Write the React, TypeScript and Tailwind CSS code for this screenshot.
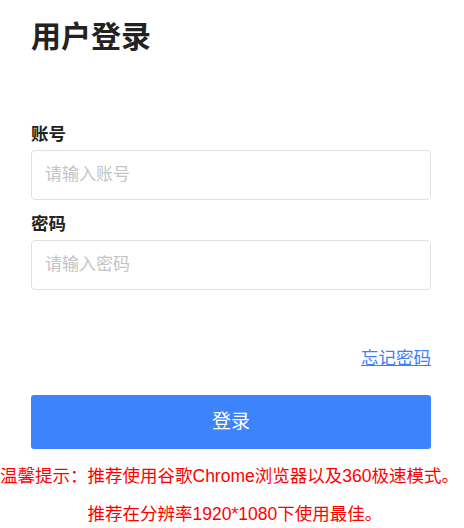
export default function App() {
  return (
    <div className="w-[464px] h-[528px] overflow-hidden bg-white font-['Liberation_Sans','Noto_Sans_CJK_SC',sans-serif]">
      <div className="w-[400px] ml-[31px] pt-[17px]">
        <h1 className="text-[30px] leading-[40px] font-bold text-[#222]">用户登录</h1>

        <form className="mt-[65px]" onSubmit={(e) => e.preventDefault()}>
          <label className="block text-[17.5px] leading-[24px] font-bold text-[#222]">账号</label>
          <input
            className="mt-1 block w-full h-[50px] px-[13px] text-[17px] border border-[#e0e0e0] rounded-[4px] outline-none placeholder:text-[#c4c4c4]"
            placeholder="请输入账号"
          />

          <label className="mt-3 block text-[17.5px] leading-[24px] font-bold text-[#222]">密码</label>
          <input
            type="password"
            className="mt-1 block w-full h-[50px] px-[13px] text-[17px] border border-[#e0e0e0] rounded-[4px] outline-none placeholder:text-[#c4c4c4]"
            placeholder="请输入密码"
          />

          <div className="mt-[56px] flex justify-end">
            <a href="#" className="text-[17.5px] leading-[24px] text-[#3d7ffb] underline">
              忘记密码
            </a>
          </div>

          <button className="mt-[25px] w-full h-[54px] rounded-[3px] bg-[#3d84fc] text-white text-[19px]">
            登录
          </button>
        </form>
      </div>

      <div className="mt-2 flex text-[17.5px] leading-[38px] text-[#ff0000]">
        <span className="shrink-0">温馨提示：</span>
        <div>
          <p className="whitespace-nowrap">推荐使用谷歌Chrome浏览器以及360极速模式。</p>
          <p className="whitespace-nowrap">推荐在分辨率1920*1080下使用最佳。</p>
        </div>
      </div>
    </div>
  )
}
